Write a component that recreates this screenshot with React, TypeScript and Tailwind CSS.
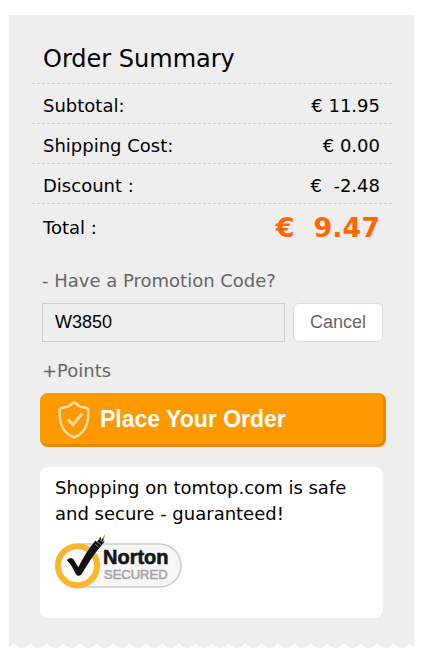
import { useState } from 'react';

const SUMMARY_ROWS = [
  { label: 'Subtotal:', value: '€ 11.95' },
  { label: 'Shipping Cost:', value: '€ 0.00' },
  { label: 'Discount :', value: '€  -2.48' },
];

function ShieldIcon() {
  return (
    <svg className="w-8 h-10 shrink-0" viewBox="0 0 32 40" fill="none" aria-hidden="true">
      <path
        d="M16 2.4C13.5 3.4 12.5 6 9 6.8C6 7.5 3 7.3 1.6 9.5C1.4 14 1.5 18 3 23.5C5 30.5 9.5 35 16 37.6C22.5 35 27 30.5 29 23.5C30.5 18 30.6 14 30.4 9.5C29 7.3 26 7.5 23 6.8C19.5 6 18.5 3.4 16 2.4Z"
        stroke="#ffe3b3"
        strokeWidth="2.4"
        strokeLinejoin="round"
      />
      <path d="M10 19.5L15 25L24.3 13.2" stroke="#ffd999" strokeWidth="3" />
    </svg>
  );
}

function NortonLogo() {
  return (
    <svg className="w-[130px] h-[60px]" viewBox="0 0 130 60" role="img" aria-label="Norton Secured">
      <rect x="9" y="12" width="119" height="43" rx="21.5" fill="#f6f6f6" stroke="#cccccc" strokeWidth="1.6" />
      <circle cx="24.5" cy="33.8" r="19.6" fill="#fbfaf7" stroke="#f9b62d" strokeWidth="6" />
      <path
        d="M13.8 28.2C16.4 25.6 19.8 25.8 21 28.2L25.3 35.3C30.5 25 36 16 42.5 8.5L44 10L47.5 4.5L48.2 8L52 3L50 9.5L52 9L48 14C41 22 34.5 32 28.5 42.3C26.8 44.3 24.3 44 23 42.2C20.4 37.3 17.6 31.4 13.8 28.2Z"
        fill="#111111"
      />
      <path d="M42 12L45.5 15M44 9.8L47.8 12.6M46 7.2L50 10" stroke="#b5a89a" strokeWidth="0.8" />
      <path d="M50.5 4.5L52.2 1.2L51.8 5.8L49.8 8Z" fill="#f6b63c" />
      <text
        x="50"
        y="32"
        className="font-['Liberation_Sans',sans-serif] text-[20px] font-bold"
        fill="#161616"
        stroke="#161616"
        strokeWidth="0.6"
      >
        Norton
      </text>
      <text x="51" y="47" className="font-['Liberation_Sans',sans-serif] text-[13px]" fill="#a3a3a3" stroke="#a3a3a3" strokeWidth="0.5">
        SECURED
      </text>
    </svg>
  );
}

function ScallopedEdge() {
  return (
    <svg className="block w-full h-[5px]" aria-hidden="true">
      <defs>
        <pattern id="scallop" x="5" width="16.5" height="5" patternUnits="userSpaceOnUse">
          <path d="M0 0C2.5 3.4 5.5 5 8.25 5S14 3.4 16.5 0Z" fill="#eeeeee" />
        </pattern>
      </defs>
      <rect width="100%" height="5" fill="url(#scallop)" />
    </svg>
  );
}

export default function App() {
  const [code, setCode] = useState('W3850');
  const [promoOpen, setPromoOpen] = useState(true);

  return (
    <main className="pl-[9px] pr-[7px] pt-[15px] font-['DejaVu_Sans',Verdana,sans-serif] text-[18px] text-black">
      <section className="bg-[#eeeeee] pt-[26px] pb-[25px]">
        <div className="ml-[23px] mr-[22px]">
          <h1 className="px-[11px] pb-[6px] text-2xl leading-9">Order Summary</h1>
          <dl>
            {SUMMARY_ROWS.map((row) => (
              <div
                key={row.label}
                className="flex h-10 items-center justify-between border-t border-dashed border-[#cccccc] pt-1 pr-3 pl-[11px]"
              >
                <dt>{row.label}</dt>
                <dd className="whitespace-pre">{row.value}</dd>
              </div>
            ))}
            <div className="flex h-11 items-center justify-between border-t border-dashed border-[#cccccc] pt-1 pr-3 pl-[11px]">
              <dt>Total :</dt>
              <dd className="whitespace-pre text-[27px] leading-9 font-bold text-[#ff6600]">{'€  9.47'}</dd>
            </div>
          </dl>
        </div>

        <div className="ml-[33px] mr-[31px] pt-5">
          <button type="button" className="block leading-7 text-[#666666]" onClick={() => setPromoOpen(!promoOpen)}>
            {promoOpen ? '-' : '+'} Have a Promotion Code?
          </button>
          {promoOpen && (
            <div className="mt-2 flex gap-2 font-['Liberation_Sans',Arial,sans-serif]">
              <input
                type="text"
                aria-label="Promotion code"
                value={code}
                onChange={(e) => setCode(e.target.value)}
                className="h-[39px] min-w-0 flex-1 border border-[#cccccc] bg-[#eeeeee] px-3"
              />
              <button
                type="button"
                onClick={() => setCode('')}
                className="h-[39px] rounded-md border border-[#dddddd] bg-white px-4 text-[#666666]"
              >
                Cancel
              </button>
            </div>
          )}
          <button type="button" className="mt-[15px] block leading-7 text-[#666666]">
            +Points
          </button>
        </div>

        <div className="ml-[31px] mr-7 pt-2">
          <button
            type="button"
            className="flex h-[54px] w-full items-center gap-[10px] rounded-lg border-r-3 border-b-3 border-[#f08300] bg-[#ff9900] pt-[2px] pl-[18px] font-['Liberation_Sans',Arial,sans-serif] text-[23px] font-bold text-white"
          >
            <ShieldIcon />
            Place Your Order
          </button>
        </div>

        <div className="ml-[31px] mr-[31px] mt-5 rounded-lg bg-white pt-2 pb-[26px]">
          <p className="px-[15px] leading-[26px]">Shopping on tomtop.com is safe and secure - guaranteed!</p>
          <div className="mt-[5px] pl-[13px]">
            <NortonLogo />
          </div>
        </div>
      </section>
      <ScallopedEdge />
    </main>
  );
}
